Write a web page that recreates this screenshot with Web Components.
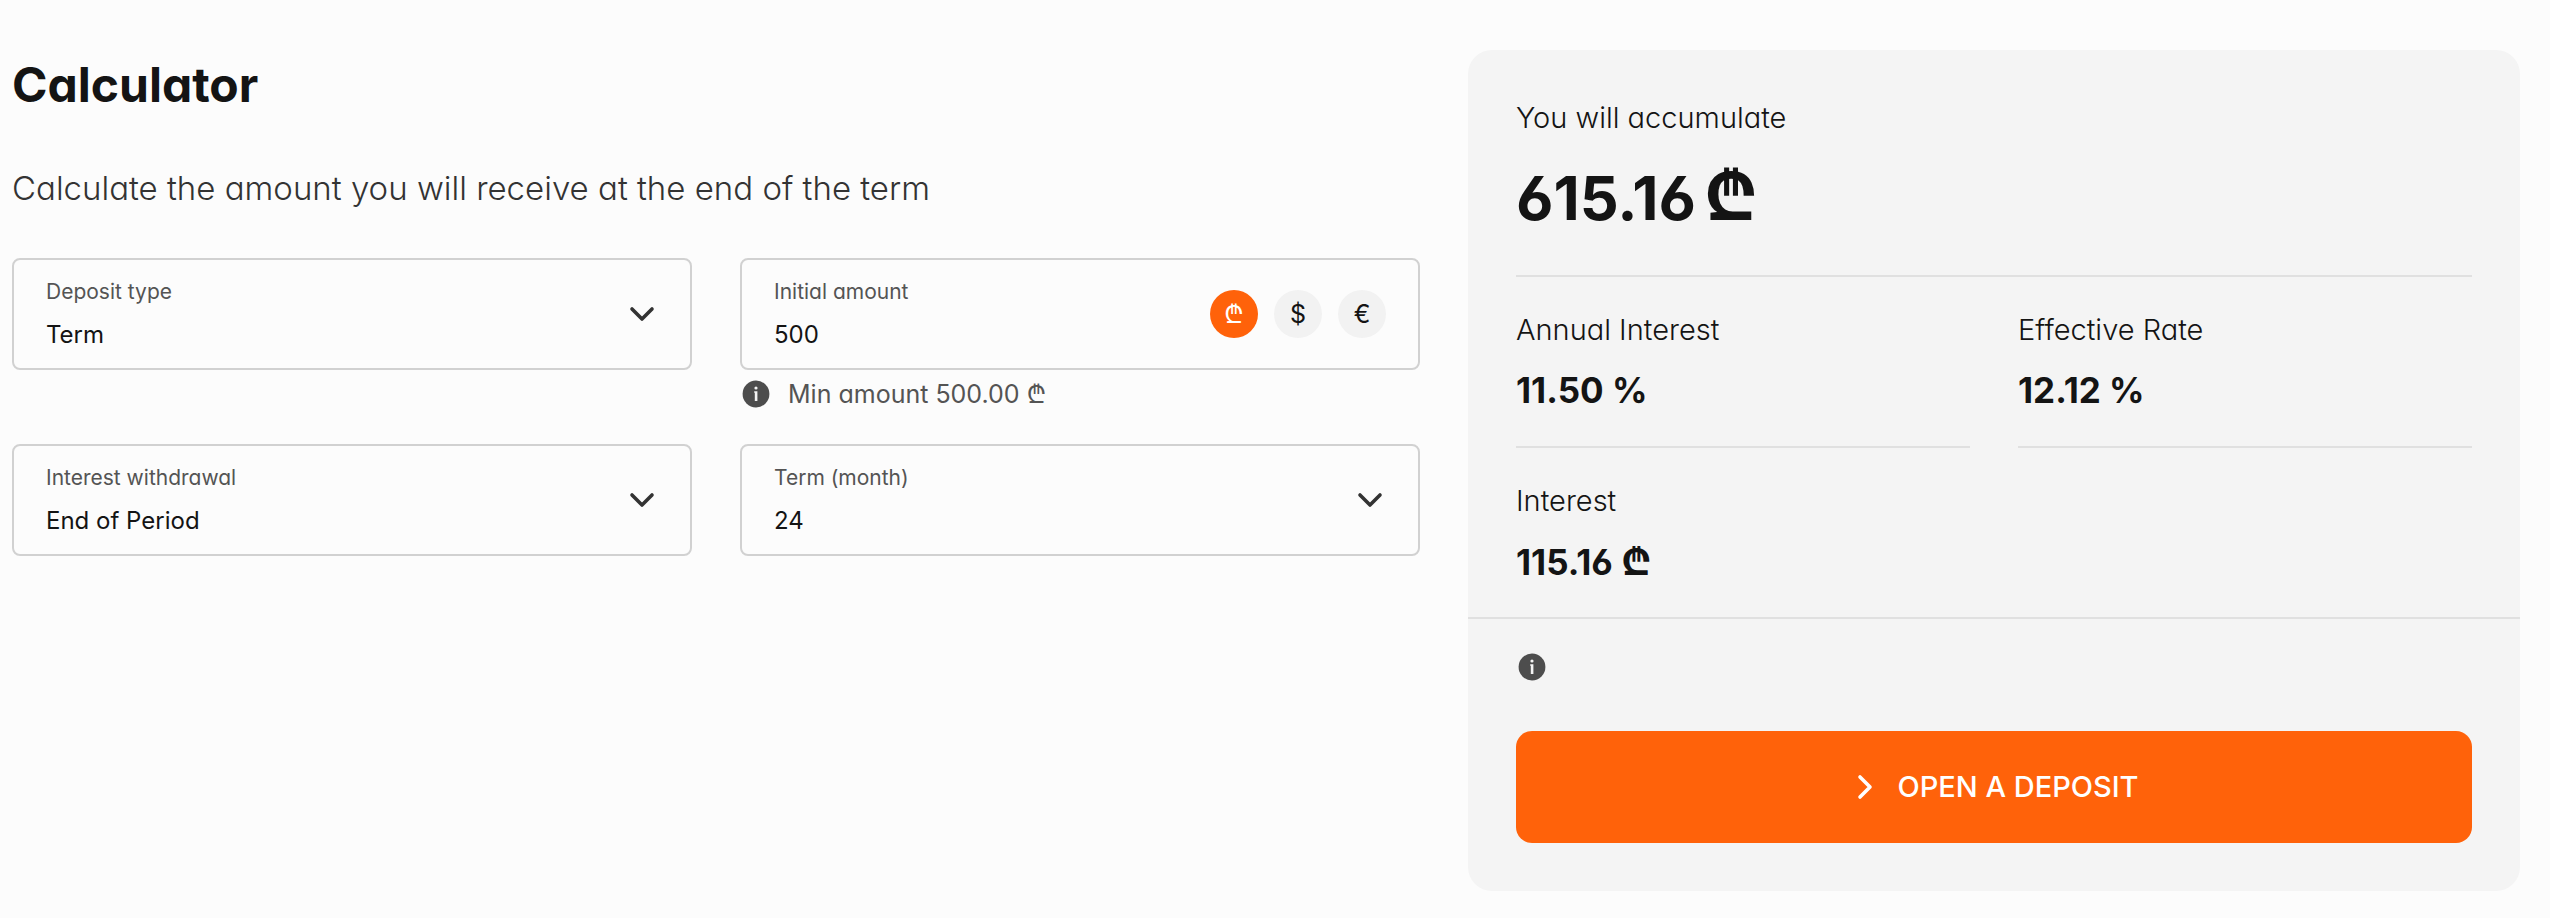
<!DOCTYPE html>
<html lang="en">
<head>
<meta charset="utf-8">
<title>Deposit calculator</title>
<style>
  body {
    margin: 0;
    background: #fcfcfc;
    color: #141414;
    font-family: Inter, "Noto Sans", sans-serif;
    font-feature-settings: "cv11", "cv03";
  }
</style>
</head>
<body>
<deposit-calculator></deposit-calculator>

<template id="icon-info">
  <style>
    :host { display: block; width: 32px; height: 32px; flex: none; color: #4d4d4d; }
    svg { display: block; width: 100%; height: 100%; }
  </style>
  <svg viewBox="0 0 32 32" aria-hidden="true">
    <circle cx="16" cy="16" r="13.4" fill="currentColor"/>
    <circle cx="16" cy="10" r="1.6" fill="#f4f4f4"/>
    <path d="M14.2 13.2H17.4V23H14.8V14.8H14.2Z" fill="#f4f4f4"/>
  </svg>
</template>

<template id="icon-chevron">
  <style>
    :host { display: block; width: 24px; height: 24px; flex: none; pointer-events: none; }
    :host([direction="right"]) { padding: 4px; }
    :host([direction="right"]) svg { transform: rotate(-90deg); }
    svg { display: block; width: 100%; height: 100%; overflow: visible; }
    path { fill: none; stroke: currentColor; stroke-width: 3.6; stroke-linecap: round; stroke-linejoin: round; }
  </style>
  <svg viewBox="0 0 24 24" aria-hidden="true"><path d="M2 7L12 17L22 7"/></svg>
</template>

<template id="lari-sign">
  <style>
    :host { display: inline-block; font-family: "Noto Sans", sans-serif; line-height: 1; }
  </style>₾</template>

<template id="field-box">
  <style>
    :host { display: block; }
    .box {
      display: flex; align-items: center; justify-content: space-between;
      box-sizing: border-box; height: 112px; padding: 0 32px;
      border: 2px solid #d1d1d1; border-radius: 8px;
    }
    .text { flex: 1; display: flex; flex-direction: column; gap: 12px; padding-top: 2px; }
    label { font-size: 21px; line-height: 28px; color: #545454; }
    select, input {
      appearance: none; width: 100%; height: 34px; margin: 0; padding: 0; border: 0; outline: 0;
      background: transparent; font: inherit; font-feature-settings: inherit; font-size: 24px; line-height: 34px; color: #141414;
    }
    icon-chevron { margin-right: 4px; color: #333; }
  </style>
  <div class="box">
    <div class="text"></div>
    <slot name="trailing"></slot>
  </div>
  <slot name="note"></slot>
</template>

<template id="currency-switch">
  <style>
    :host { display: flex; gap: 16px; }
    button {
      width: 48px; height: 48px; padding: 0; border: 0; border-radius: 50%;
      background: #f2f2f2; color: #141414; font: inherit; font-size: 25px; line-height: 48px; cursor: pointer;
    }
    button[aria-pressed="true"] { background: #ff620a; color: #fff; }
  </style>
  <button type="button" aria-label="Lari" aria-pressed="true"><lari-sign></lari-sign></button>
  <button type="button" aria-label="Dollar" aria-pressed="false">$</button>
  <button type="button" aria-label="Euro" aria-pressed="false">€</button>
</template>

<template id="field-note">
  <style>
    :host { display: flex; align-items: center; gap: 16px; height: 32px; margin-top: 8px; font-size: 25px; line-height: 32px; color: #545454; }
  </style>
  <icon-info></icon-info><span><slot></slot></span>
</template>

<template id="result-item">
  <style>
    :host { display: flex; flex-direction: column; gap: 22px; padding: 35px 0 36px; }
    :host([ruled]) { border-bottom: 2px solid #e0e0e0; }
    .name { font-size: 29px; line-height: 36px; font-weight: 300; }
    .value { height: 40px; font-size: 35px; line-height: 40px; font-weight: 700; }
    :host([total]) { gap: 16px; padding: 0 0 33px; }
    :host([total]) .name { line-height: 40px; }
    :host([total]) .value { height: 88px; font-size: 61px; line-height: 88px; }
  </style>
  <span class="name"><slot name="name"></slot></span>
  <span class="value"><slot></slot></span>
</template>

<template id="result-panel">
  <style>
    :host { display: block; border-radius: 24px; background: #f4f4f4; }
    .figures { padding: 48px 48px 0; border-bottom: 2px solid #e0e0e0; }
    .grid { display: grid; grid-template-columns: 1fr 1fr; column-gap: 48px; }
    lari-sign { font-size: 38px; }
    result-item[total] lari-sign { margin-left: 8px; font-size: 68px; }
    .action { display: flex; flex-direction: column; padding: 32px 48px 48px; gap: 48px; }
    button {
      display: flex; align-items: center; justify-content: center; gap: 16px;
      height: 112px; padding: 0; border: 0; border-radius: 16px; background: #ff620a; color: #fff;
      font: inherit; font-size: 29px; font-weight: 500; line-height: 36px; cursor: pointer;
    }
  </style>
  <div class="figures">
    <result-item total ruled><span slot="name">You will accumulate</span>615.16<lari-sign></lari-sign></result-item>
    <div class="grid">
      <result-item ruled><span slot="name">Annual Interest</span>11.50 %</result-item>
      <result-item ruled><span slot="name">Effective Rate</span>12.12 %</result-item>
      <result-item><span slot="name">Interest</span>115.16 <lari-sign></lari-sign></result-item>
    </div>
  </div>
  <div class="action">
    <icon-info></icon-info>
    <button type="button"><icon-chevron direction="right"></icon-chevron>OPEN A DEPOSIT</button>
  </div>
</template>

<template id="deposit-calculator">
  <style>
    :host { display: grid; grid-template-columns: minmax(0, 1408fr) minmax(0, 1052fr); column-gap: 48px; align-items: start; padding: 50px 30px 26px 12px; }
    h2 { margin: 0; font-size: 48px; line-height: 70px; font-weight: 700; }
    p { margin: 48px 0 50px; font-size: 33px; line-height: 40px; font-weight: 350; color: #333; }
    form { display: grid; grid-template-columns: 1fr 1fr; column-gap: 48px; row-gap: 34px; }
  </style>
  <section>
    <h2>Calculator</h2>
    <p>Calculate the amount you will receive at the end of the term</p>
    <form>
      <field-box label="Deposit type" value="Term" kind="select"></field-box>
      <field-box label="Initial amount" value="500" kind="input">
        <currency-switch slot="trailing"></currency-switch>
        <field-note slot="note">Min amount 500.00 <lari-sign></lari-sign></field-note>
      </field-box>
      <field-box label="Interest withdrawal" value="End of Period" kind="select"></field-box>
      <field-box label="Term (month)" value="24" kind="select"></field-box>
    </form>
  </section>
  <result-panel></result-panel>
</template>

<script>
  class TemplateElement extends HTMLElement {
    constructor() {
      super();
      const template = document.getElementById(this.localName);
      this.attachShadow({ mode: "open" }).append(template.content.cloneNode(true));
    }
  }

  class FieldBox extends TemplateElement {
    connectedCallback() {
      const text = this.shadowRoot.querySelector(".text");
      if (text.childElementCount) return;
      const label = document.createElement("label");
      label.htmlFor = "control";
      label.textContent = this.getAttribute("label");
      const control = document.createElement(this.getAttribute("kind"));
      control.id = "control";
      if (control.localName === "select") {
        control.add(new Option(this.getAttribute("value")));
        text.after(document.createElement("icon-chevron"));
      } else {
        control.type = "text";
        control.inputMode = "decimal";
        control.value = this.getAttribute("value");
      }
      text.append(label, control);
    }
  }

  class CurrencySwitch extends TemplateElement {
    connectedCallback() {
      const buttons = [...this.shadowRoot.querySelectorAll("button")];
      buttons.forEach(button => button.onclick = () =>
        buttons.forEach(other => other.setAttribute("aria-pressed", other === button)));
    }
  }

  for (const name of ["icon-info", "icon-chevron", "lari-sign", "field-note", "result-item", "result-panel", "deposit-calculator"])
    customElements.define(name, class extends TemplateElement {});
  customElements.define("field-box", FieldBox);
  customElements.define("currency-switch", CurrencySwitch);
</script>
</body>
</html>
